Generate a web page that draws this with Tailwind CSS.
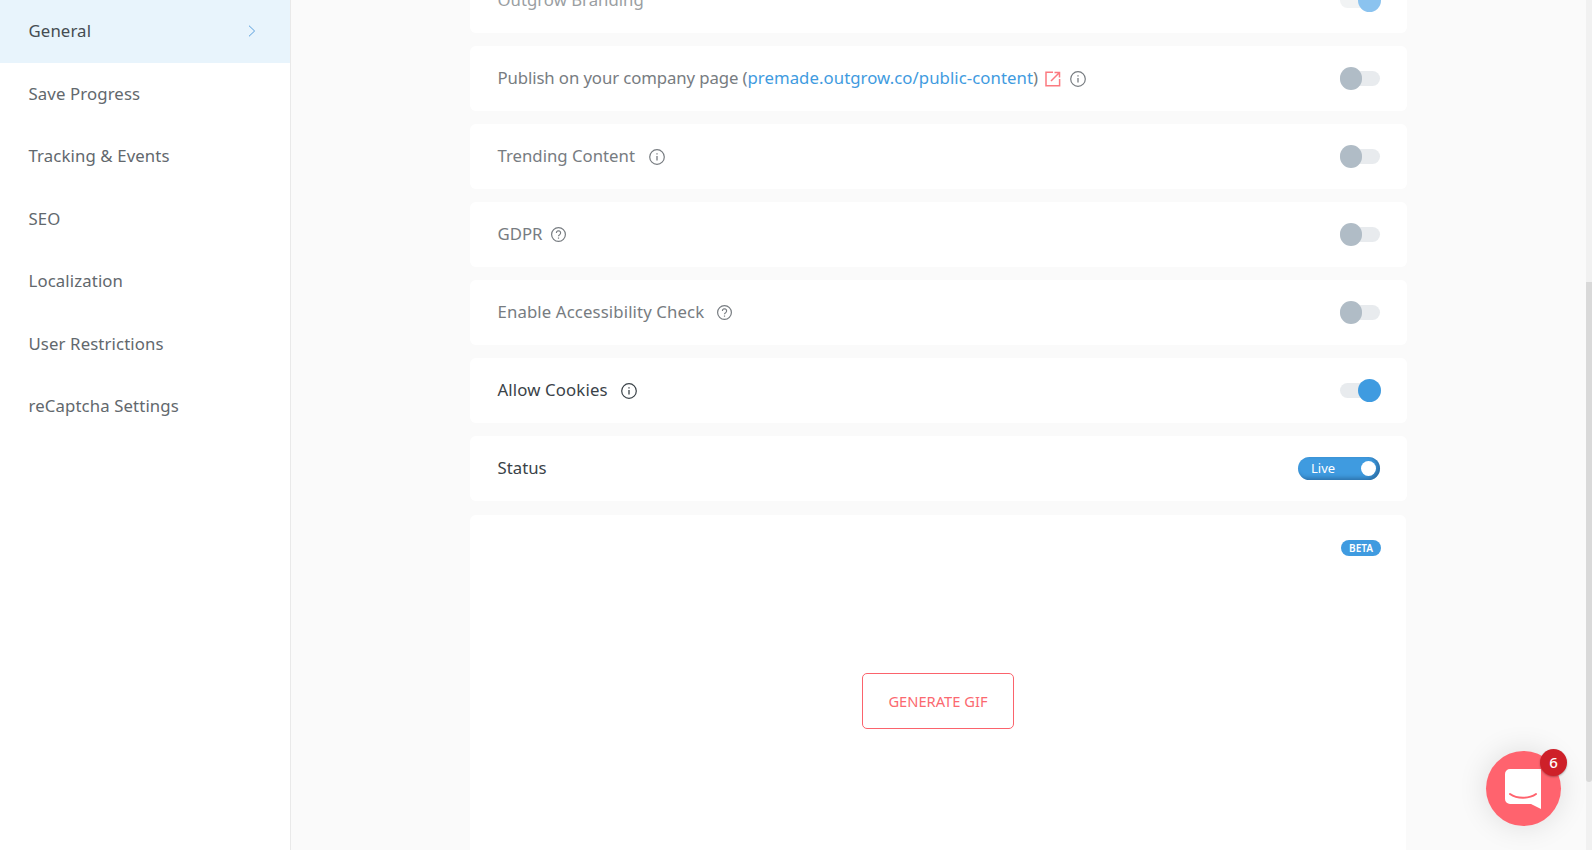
<!DOCTYPE html>
<html><head><meta charset="utf-8"><script src="https://cdn.jsdelivr.net/npm/@tailwindcss/browser@4"></script></head>
<body class="m-0">
<div class="relative flex h-[850px] w-[1592px] overflow-hidden bg-[#fafafa] font-['Noto_Sans',sans-serif] text-[16.75px]">
  <aside class="w-[291px] h-full shrink-0 bg-white border-r border-[#e9e9e9] flex flex-col text-[#62686d] tracking-[0.12px]">
    <div class="h-[63px] pl-[28.5px] pr-[34px] pb-[2px] flex items-center justify-between bg-[#e8f4fc] text-[#454c52]"><span>General</span>
      <svg class="w-[8px] h-[12px]" viewBox="0 0 8 12" fill="none" stroke="#5a9fdc" stroke-width="1"><path d="M1 .7 6.6 6 1 11.3"/></svg></div>
    <div class="h-[62.5px] pl-[28.5px] pb-[2px] flex items-center">Save Progress</div>
    <div class="h-[62.5px] pl-[28.5px] pb-[2px] flex items-center">Tracking &amp; Events</div>
    <div class="h-[62.5px] pl-[28.5px] pb-[2px] flex items-center">SEO</div>
    <div class="h-[62.5px] pl-[28.5px] pb-[2px] flex items-center">Localization</div>
    <div class="h-[62.5px] pl-[28.5px] pb-[2px] flex items-center">User Restrictions</div>
    <div class="h-[62.5px] pl-[28.5px] pb-[2px] flex items-center">reCaptcha Settings</div>
  </aside>
  <main class="flex-1 px-[179px] flex flex-col gap-[13px] mt-[-32px] text-[#777c81]">
    <div class="h-[65px] shrink-0 bg-white rounded-md pl-[27.5px] pr-[26px] flex items-center justify-between"><span class="text-[#9a9ea2] mb-[2px]">Outgrow Branding</span>
      <div class="relative w-[41px] h-[15px] rounded-full bg-[#f1f3f4]"><div class="absolute right-0 top-[-4px] w-[23px] h-[23px] rounded-full bg-[#8bc3ef]"></div></div></div>
    <div class="h-[65px] shrink-0 bg-white rounded-md pl-[27.5px] pr-[27px] flex items-center justify-between">
      <div class="flex items-center"><span class="mb-[2px] tracking-[-0.1px]">Publish on your company page (<a class="text-[#3f9be0] tracking-[0.06px]">premade.outgrow.co/public-content</a>)</span>
        <svg class="ml-[7px] w-[16px] h-[16px]" viewBox="0 0 16 16" fill="none" stroke="#fb7a80" stroke-width="1.5"><path d="M8 1.2H1v13.6h13.6V8"/><path d="M6 10 14 2M9.5 1.5h5v5"/></svg>
        <svg class="ml-[9px] w-[16px] h-[16px]" viewBox="0 0 16 16" fill="none" stroke="#777c81"><circle cx="8" cy="8" r="7.3" stroke-width="1.2"/><path d="M8 7v4.5" stroke-width="1.3"/><path d="M8 4.2v1.4" stroke-width="1.3"/></svg></div>
      <div class="relative w-[40px] h-[15px] rounded-full bg-[#e8ebee]"><div class="absolute left-0 top-[-4px] w-[22px] h-[23px] rounded-full bg-[#b0bcc6]"></div></div></div>
    <div class="h-[65px] shrink-0 bg-white rounded-md pl-[27.5px] pr-[27px] flex items-center justify-between">
      <div class="flex items-center"><span class="mb-[2px]">Trending Content</span>
        <svg class="ml-[14px] w-[16px] h-[16px]" viewBox="0 0 16 16" fill="none" stroke="#777c81"><circle cx="8" cy="8" r="7.3" stroke-width="1.2"/><path d="M8 7v4.5" stroke-width="1.3"/><path d="M8 4.2v1.4" stroke-width="1.3"/></svg></div>
      <div class="relative w-[40px] h-[15px] rounded-full bg-[#e8ebee]"><div class="absolute left-0 top-[-4px] w-[22px] h-[23px] rounded-full bg-[#b0bcc6]"></div></div></div>
    <div class="h-[65px] shrink-0 bg-white rounded-md pl-[27.5px] pr-[27px] flex items-center justify-between">
      <div class="flex items-center"><span class="mb-[2px]">GDPR</span>
        <svg class="ml-[9px] w-[15px] h-[15px]" viewBox="0 0 15 15" fill="none" stroke="#777c81"><circle cx="7.5" cy="7.5" r="6.9" stroke-width="1.2"/><path d="M5.4 5.9a2.1 2.1 0 1 1 3.2 1.8c-.7.4-1.1.8-1.1 1.6" stroke-width="1.2"/><path d="M7.5 10.5v1.2" stroke-width="1.2"/></svg></div>
      <div class="relative w-[40px] h-[15px] rounded-full bg-[#e8ebee]"><div class="absolute left-0 top-[-4px] w-[22px] h-[23px] rounded-full bg-[#b0bcc6]"></div></div></div>
    <div class="h-[65px] shrink-0 bg-white rounded-md pl-[27.5px] pr-[27px] flex items-center justify-between">
      <div class="flex items-center"><span class="mb-[2px] tracking-[0.12px]">Enable Accessibility Check</span>
        <svg class="ml-[13px] w-[15px] h-[15px]" viewBox="0 0 15 15" fill="none" stroke="#777c81"><circle cx="7.5" cy="7.5" r="6.9" stroke-width="1.2"/><path d="M5.4 5.9a2.1 2.1 0 1 1 3.2 1.8c-.7.4-1.1.8-1.1 1.6" stroke-width="1.2"/><path d="M7.5 10.5v1.2" stroke-width="1.2"/></svg></div>
      <div class="relative w-[40px] h-[15px] rounded-full bg-[#e8ebee]"><div class="absolute left-0 top-[-4px] w-[22px] h-[23px] rounded-full bg-[#b0bcc6]"></div></div></div>
    <div class="h-[65px] shrink-0 bg-white rounded-md pl-[27.5px] pr-[26px] flex items-center justify-between text-[#3a4248]">
      <div class="flex items-center"><span class="mb-[2px] tracking-[0.15px]">Allow Cookies</span>
        <svg class="ml-[13px] w-[16px] h-[16px]" viewBox="0 0 16 16" fill="none" stroke="#3a4248"><circle cx="8" cy="8" r="7.3" stroke-width="1.2"/><path d="M8 7v4.5" stroke-width="1.3"/><path d="M8 4.2v1.4" stroke-width="1.3"/></svg></div>
      <div class="relative w-[41px] h-[15px] rounded-full bg-[#e8ebee]"><div class="absolute right-0 top-[-4px] w-[23px] h-[23px] rounded-full bg-[#3f9be0]"></div></div></div>
    <div class="h-[65px] shrink-0 bg-white rounded-md pl-[27.5px] pr-[27px] flex items-center justify-between text-[#3a4248]">
      <span class="mb-[2px]">Status</span>
      <div class="w-[82px] h-[23px] rounded-full bg-[#3f9be0] pl-[13px] pr-[4px] flex items-center justify-between text-white text-[13px] shadow-[inset_-3px_-2px_4px_rgba(20,60,100,0.45)]"><span>Live</span><div class="w-[15px] h-[15px] rounded-full bg-white"></div></div></div>
    <div class="h-[400px] shrink-0 bg-white rounded-md mr-[1px] mt-[1px] pt-[25px] pr-[25px] flex flex-col">
      <div class="self-end h-[16px] w-[40px] rounded-full bg-[#3f9be0] text-white text-[10px] font-semibold flex items-center justify-center">BETA</div>
      <button class="mt-[117px] self-center w-[152px] h-[56px] border border-[#fb636c] rounded-[5px] text-[#fb6970] text-[14.7px] ml-[25px]">GENERATE GIF</button>
    </div>
  </main>
  <div class="w-[6px] h-full shrink-0 bg-[#f1f1f1]"><div class="mt-[282px] h-[500px] bg-[#d9d9d9] rounded-b-[3px]"></div></div>
  <div class="absolute left-[1486px] top-[751px] w-[75px] h-[75px] rounded-full bg-[#ff636e] shadow-[0_0_30px_rgba(0,0,0,0.12)] flex items-center justify-center">
    <svg class="w-[36px] h-[40px] mr-[1px]" viewBox="0 0 36 40"><path d="M5 0H36V40L26 35H5A5 5 0 0 1 0 30V5A5 5 0 0 1 5 0Z" fill="#fff"/><path d="M5 25C12 30 24 30 31 25" fill="none" stroke="#ff636e" stroke-width="2" stroke-linecap="round"/></svg>
  </div>
  <div class="absolute left-[1540px] top-[749px] w-[27px] h-[27px] rounded-full bg-[#ce2029] shadow-[0_1px_2px_rgba(0,0,0,0.3)] text-white text-[15px] font-medium flex items-center justify-center">6</div>
</div>
</body></html>
